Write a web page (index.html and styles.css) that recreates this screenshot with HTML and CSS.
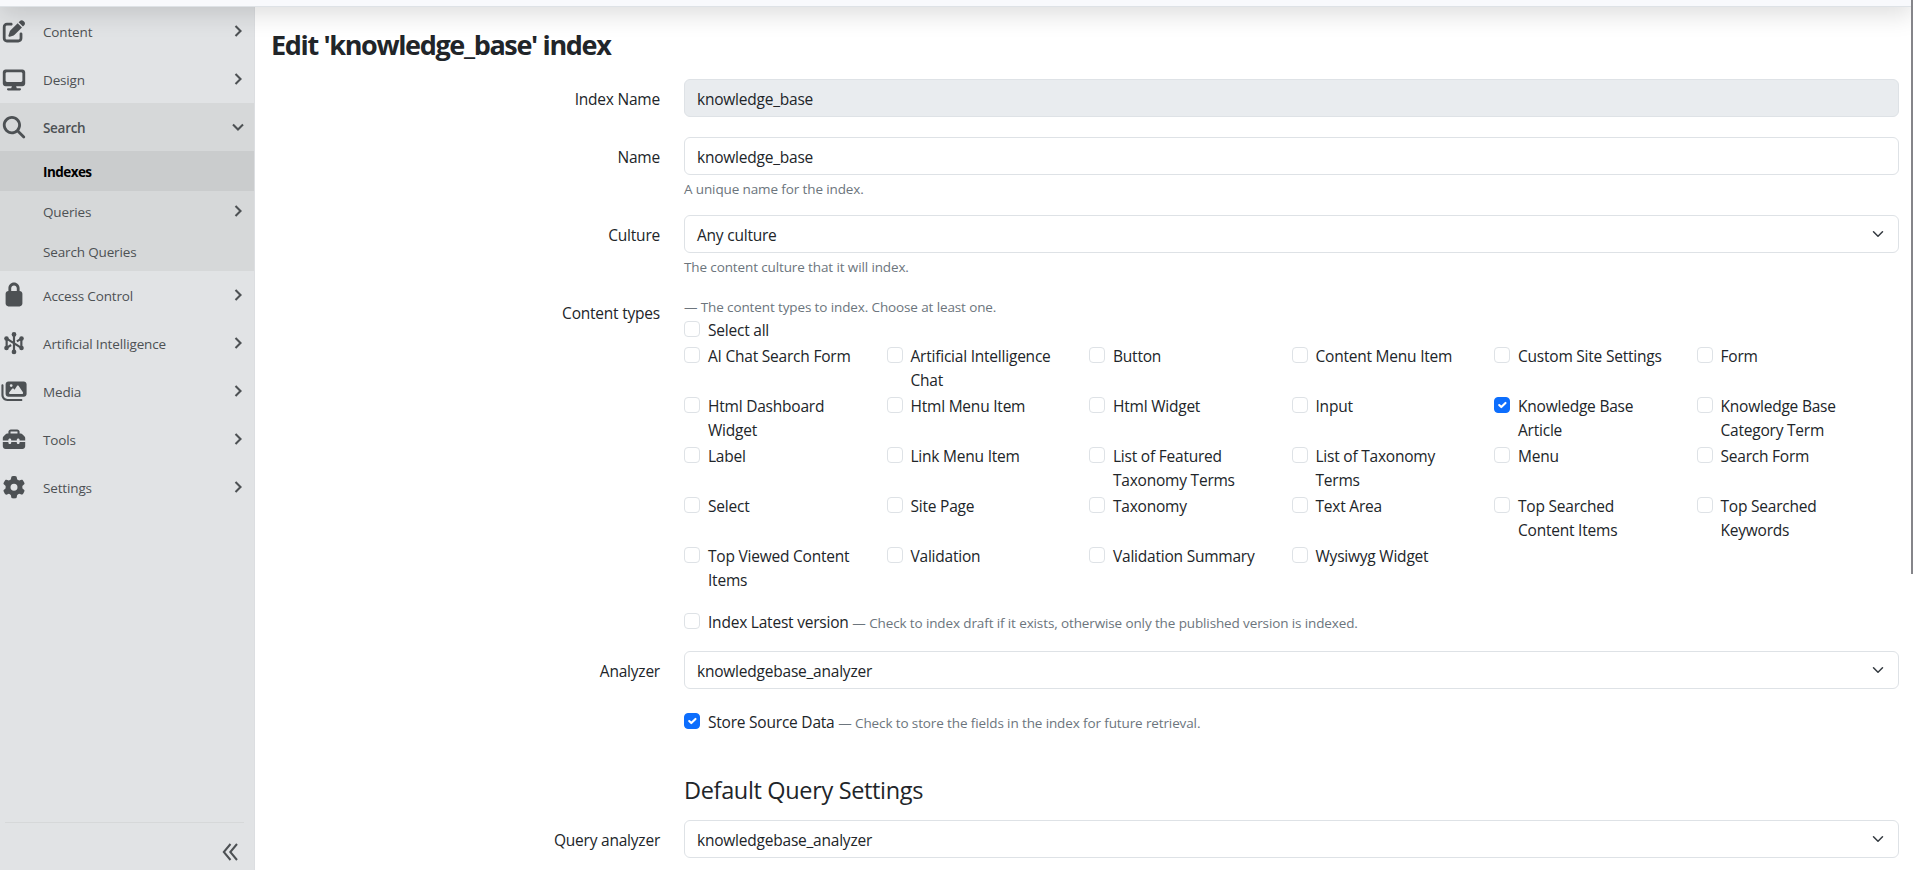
FILE: index.html
```html
<!DOCTYPE html>
<html lang="en">
<head>
  <meta charset="UTF-8" />
  <title>Edit 'knowledge_base' index</title>
  <link rel="stylesheet" href="styles.css">
</head>
<body>

<header class="topbar"></header>

<div class="wrapper">
  <!-- Left navigation -->
  <nav class="sidebar">
    <ul class="menu">
      <li><a class="item" href="#">
        <svg class="icon" viewBox="-64 0 640 512"><path d="M471.6 21.7c-21.9-21.9-57.3-21.9-79.2 0L362.3 51.7l97.9 97.9 30.1-30.1c21.9-21.9 21.9-57.3 0-79.2L471.6 21.7zm-299.2 220c-6.1 6.1-10.8 13.6-13.5 21.9l-29.6 88.8c-2.9 8.6-.6 18.1 5.8 24.6s15.9 8.7 24.6 5.8l88.8-29.6c8.2-2.7 15.7-7.4 21.9-13.5L437.7 172.3 339.7 74.3 172.4 241.7zM96 64C43 64 0 107 0 160V416c0 53 43 96 96 96H352c53 0 96-43 96-96V320c0-17.7-14.3-32-32-32s-32 14.3-32 32v96c0 17.700-14.300 32-32 32H96c-17.700 0-32-14.300-32-32V160c0-17.700 14.300-32 32-32h96c17.700 0 32-14.300 32-32s-14.300-32-32-32H96z"/></svg>
        <span>Content</span>
        <svg class="arrow" viewBox="0 0 12 12"><path d="M3.5 1l5 5-5 5"/></svg></a></li>
      <li><a class="item" href="#">
        <svg class="icon" viewBox="-64 0 640 512"><path d="M64 32C28.700 32 0 60.700 0 96v256c0 35.300 28.700 64 64 64h144l-16 48h-72c-13.300 0-24 10.700-24 24s10.700 24 24 24h272c13.300 0 24-10.700 24-24s-10.700-24-24-24h-72l-16-48h144c35.300 0 64-28.700 64-64V96c0-35.300-28.700-64-64-64H64zM96 96h320c17.700 0 32 14.300 32 32v160c0 17.700-14.300 32-32 32H96c-17.700 0-32-14.300-32-32V128c0-17.700 14.300-32 32-32z" fill-rule="evenodd"/></svg>
        <span>Design</span>
        <svg class="arrow" viewBox="0 0 12 12"><path d="M3.5 1l5 5-5 5"/></svg></a></li>
      <li class="open"><a class="item" href="#">
        <svg class="icon" viewBox="-64 0 640 512"><path d="M416 208c0 45.900-14.900 88.300-40 122.700L502.600 457.400c12.500 12.500 12.500 32.800 0 45.300s-32.800 12.500-45.300 0L330.700 376c-34.400 25.200-76.800 40-122.700 40C93.100 416 0 322.900 0 208S93.100 0 208 0S416 93.100 416 208zM208 352a144 144 0 1 0 0-288 144 144 0 1 0 0 288z"/></svg>
        <span>Search</span>
        <svg class="arrow" viewBox="0 0 12 12"><path d="M1 3.500l5 5 5-5"/></svg></a>
        <ul class="submenu">
          <li><a class="item active" href="#"><span>Indexes</span></a></li>
          <li><a class="item" href="#"><span>Queries</span>
            <svg class="arrow" viewBox="0 0 12 12"><path d="M3.5 1l5 5-5 5"/></svg></a></li>
          <li><a class="item" href="#"><span>Search Queries</span></a></li>
        </ul>
      </li>
      <li><a class="item" href="#">
        <svg class="icon" viewBox="-64 0 640 512"><path d="M192 96v64h128V96c0-35.300-28.700-64-64-64s-64 28.700-64 64zm-64 64V96c0-70.700 57.300-128 128-128S384 25.300 384 96v64c35.300 0 64 28.700 64 64v224c0 35.300-28.700 64-64 64H128c-35.300 0-64-28.700-64-64V224c0-35.300 28.700-64 64-64z" fill-rule="evenodd"/></svg>
        <span>Access Control</span>
        <svg class="arrow" viewBox="0 0 12 12"><path d="M3.5 1l5 5-5 5"/></svg></a></li>
      <li><a class="item" href="#">
        <svg class="icon" viewBox="-64 0 640 512"><path class="line" d="M256 60V452M88 135V377M424 135V377M88 150L424 362M88 362L190 298M424 150L322 214"/><circle cx="256" cy="56" r="54"/><circle cx="256" cy="456" r="54"/><circle cx="84" cy="147" r="52"/><circle cx="428" cy="147" r="52"/><circle cx="84" cy="365" r="52"/><circle cx="428" cy="365" r="52"/></svg>
        <span>Artificial Intelligence</span>
        <svg class="arrow" viewBox="0 0 12 12"><path d="M3.5 1l5 5-5 5"/></svg></a></li>
      <li><a class="item" href="#">
        <svg class="icon" viewBox="-32 0 640 512"><path d="M160 32c-35.300 0-64 28.700-64 64v224c0 35.300 28.700 64 64 64h352c35.300 0 64-28.700 64-64V96c0-35.300-28.700-64-64-64H160zM396 138.700l96 144c4.900 7.400 5.400 16.800 1.200 24.600S480.900 320 472 320H200c-9.200 0-17.600-5.300-21.600-13.600s-2.900-18.200 2.900-25.400l64-80c4.600-5.700 11.400-9 18.700-9s14.200 3.300 18.700 9l17.300 21.600 56-84C360.500 132 368 128 376 128s15.500 4 20 10.700zM192 128a32 32 0 1 1 64 0 32 32 0 1 1-64 0zM48 120c0-13.300-10.700-24-24-24S0 106.700 0 120v224c0 75.100 60.900 136 136 136h320c13.300 0 24-10.700 24-24s-10.700-24-24-24H136c-48.600 0-88-39.400-88-88V120z"/></svg>
        <span>Media</span>
        <svg class="arrow" viewBox="0 0 12 12"><path d="M3.5 1l5 5-5 5"/></svg></a></li>
      <li><a class="item" href="#">
        <svg class="icon" viewBox="-64 0 640 512"><path d="M176 88v40h160V88c0-4.400-3.600-8-8-8H184c-4.400 0-8 3.600-8 8zm-48 40V88c0-30.900 25.100-56 56-56h144c30.900 0 56 25.100 56 56v40h28.100c12.700 0 24.900 5.100 33.900 14.100l51.900 51.900c9 9 14.100 21.200 14.100 33.900V288H384v-16c0-17.700-14.300-32-32-32s-32 14.300-32 32v16H192v-16c0-17.700-14.300-32-32-32s-32 14.300-32 32v16H0v-60.100c0-12.700 5.100-24.900 14.100-33.900l51.900-51.900c9-9 21.200-14.100 33.900-14.100H128zM0 416v-96h128v16c0 17.700 14.300 32 32 32s32-14.300 32-32v-16h128v16c0 17.700 14.300 32 32 32s32-14.300 32-32v-16h128v96c0 35.300-28.700 64-64 64H64c-35.300 0-64-28.700-64-64z"/></svg>
        <span>Tools</span>
        <svg class="arrow" viewBox="0 0 12 12"><path d="M3.5 1l5 5-5 5"/></svg></a></li>
      <li><a class="item" href="#">
        <svg class="icon" viewBox="-64 0 640 512"><path d="M495.900 166.600c3.200 8.700 .5 18.400-6.400 24.600l-43.300 39.400c1.100 8.300 1.700 16.800 1.700 25.400s-.6 17.100-1.700 25.400l43.300 39.400c6.900 6.200 9.600 15.900 6.400 24.600c-4.400 11.900-9.700 23.300-15.800 34.300l-4.700 8.100c-6.600 11-14 21.400-22.100 31.200c-5.900 7.200-15.700 9.600-24.500 6.800l-55.700-17.700c-13.400 10.300-28.200 18.900-44 25.400l-12.500 57.100c-2 9.100-9 16.300-18.200 17.800c-13.800 2.300-28 3.500-42.500 3.500s-28.700-1.200-42.500-3.500c-9.200-1.500-16.200-8.700-18.200-17.800l-12.500-57.100c-15.800-6.500-30.600-15.100-44-25.400L83.100 425.900c-8.800 2.800-18.600 .3-24.500-6.800c-8.100-9.800-15.500-20.200-22.100-31.200l-4.700-8.100c-6.100-11-11.400-22.400-15.800-34.300c-3.200-8.700-.5-18.400 6.400-24.600l43.300-39.400C64.600 273.100 64 264.600 64 256s.6-17.100 1.700-25.400L22.400 191.200c-6.900-6.200-9.600-15.900-6.400-24.600c4.400-11.900 9.700-23.300 15.800-34.300l4.700-8.100c6.600-11 14-21.400 22.100-31.200c5.900-7.200 15.700-9.600 24.500-6.800l55.700 17.700c13.400-10.300 28.200-18.900 44-25.400l12.500-57.100c2-9.100 9-16.300 18.200-17.800C227.300 1.200 241.500 0 256 0s28.700 1.200 42.500 3.500c9.200 1.500 16.200 8.700 18.200 17.800l12.500 57.100c15.800 6.500 30.600 15.100 44 25.400l55.700-17.700c8.800-2.800 18.600-.3 24.500 6.800c8.100 9.800 15.500 20.200 22.100 31.200l4.700 8.100c6.100 11 11.400 22.400 15.800 34.300zM256 336a80 80 0 1 0 0-160 80 80 0 1 0 0 160z"/></svg>
        <span>Settings</span>
        <svg class="arrow" viewBox="0 0 12 12"><path d="M3.5 1l5 5-5 5"/></svg></a></li>
    </ul>
    <div class="compact">
      <svg class="collapse" viewBox="0 0 16 18"><path d="M8.500 1L1.800 9l6.700 8M15 1L8.300 9l6.700 8"/></svg>
    </div>
  </nav>

  <!-- Index form -->
  <main class="content">
    <h1>Edit 'knowledge_base' index</h1>

    <form>
      <div class="row">
        <label class="label">Index Name</label>
        <div class="field"><div class="control disabled">knowledge_base</div></div>
      </div>

      <div class="row">
        <label class="label">Name</label>
        <div class="field">
          <div class="control">knowledge_base</div>
          <span class="hint">A unique name for the index.</span>
        </div>
      </div>

      <div class="row">
        <label class="label">Culture</label>
        <div class="field">
          <div class="control">Any culture <svg class="caret" viewBox="0 0 16 16"><path d="m2 5 6 6 6-6"/></svg></div>
          <span class="hint">The content culture that it will index.</span>
        </div>
      </div>

      <div class="row types">
        <label class="label">Content types</label>
        <div class="field">
          <span class="hint intro">— The content types to index. Choose at least one.</span>
          <label class="check"><i class="box"></i><span>Select all</span></label>
          <div class="grid">
            <label class="check"><i class="box"></i><span>AI Chat Search Form</span></label>
            <label class="check"><i class="box"></i><span>Artificial Intelligence<br>Chat</span></label>
            <label class="check"><i class="box"></i><span>Button</span></label>
            <label class="check"><i class="box"></i><span>Content Menu Item</span></label>
            <label class="check"><i class="box"></i><span>Custom Site Settings</span></label>
            <label class="check"><i class="box"></i><span>Form</span></label>
            <label class="check"><i class="box"></i><span>Html Dashboard<br>Widget</span></label>
            <label class="check"><i class="box"></i><span>Html Menu Item</span></label>
            <label class="check"><i class="box"></i><span>Html Widget</span></label>
            <label class="check"><i class="box"></i><span>Input</span></label>
            <label class="check"><i class="box checked"><svg viewBox="0 0 20 20"><path d="m6 10 3 3 6-6"/></svg></i><span>Knowledge Base<br>Article</span></label>
            <label class="check"><i class="box"></i><span>Knowledge Base<br>Category Term</span></label>
            <label class="check"><i class="box"></i><span>Label</span></label>
            <label class="check"><i class="box"></i><span>Link Menu Item</span></label>
            <label class="check"><i class="box"></i><span>List of Featured<br>Taxonomy Terms</span></label>
            <label class="check"><i class="box"></i><span>List of Taxonomy<br>Terms</span></label>
            <label class="check"><i class="box"></i><span>Menu</span></label>
            <label class="check"><i class="box"></i><span>Search Form</span></label>
            <label class="check"><i class="box"></i><span>Select</span></label>
            <label class="check"><i class="box"></i><span>Site Page</span></label>
            <label class="check"><i class="box"></i><span>Taxonomy</span></label>
            <label class="check"><i class="box"></i><span>Text Area</span></label>
            <label class="check"><i class="box"></i><span>Top Searched<br>Content Items</span></label>
            <label class="check"><i class="box"></i><span>Top Searched<br>Keywords</span></label>
            <label class="check"><i class="box"></i><span>Top Viewed Content<br>Items</span></label>
            <label class="check"><i class="box"></i><span>Validation</span></label>
            <label class="check"><i class="box"></i><span>Validation Summary</span></label>
            <label class="check"><i class="box"></i><span>Wysiwyg Widget</span></label>
          </div>
        </div>
      </div>

      <div class="row latest">
        <div class="label"></div>
        <div class="field">
          <label class="check"><i class="box"></i><span>Index Latest version <span class="hint">— Check to index draft if it exists, otherwise only the published version is indexed.</span></span></label>
        </div>
      </div>

      <div class="row">
        <label class="label">Analyzer</label>
        <div class="field">
          <div class="control">knowledgebase_analyzer <svg class="caret" viewBox="0 0 16 16"><path d="m2 5 6 6 6-6"/></svg></div>
        </div>
      </div>

      <div class="row store">
        <div class="label"></div>
        <div class="field">
          <label class="check"><i class="box checked"><svg viewBox="0 0 20 20"><path d="m6 10 3 3 6-6"/></svg></i><span>Store Source Data <span class="hint">— Check to store the fields in the index for future retrieval.</span></span></label>
        </div>
      </div>

      <div class="row heading">
        <div class="label"></div>
        <div class="field"><h4>Default Query Settings</h4></div>
      </div>

      <div class="row">
        <label class="label">Query analyzer</label>
        <div class="field">
          <div class="control">knowledgebase_analyzer <svg class="caret" viewBox="0 0 16 16"><path d="m2 5 6 6 6-6"/></svg></div>
        </div>
      </div>
    </form>
  </main>
</div>

<div class="scrollbar"></div>

</body>
</html>
```
FILE: styles.css
```css
* {
  box-sizing: border-box;
}
body {
  margin: 0;
  height: 870px;
  overflow: hidden;
  background: #fff;
  color: #212529;
  font-family: "Segoe UI", "Open Sans", "Noto Sans", sans-serif;
  font-size: 15.5px;
  line-height: 24px;
  letter-spacing: -0.22px;
}
ul {
  list-style: none;
  margin: 0;
  padding: 0;
}
.topbar {
  position: relative;
  z-index: 2;
  height: 57px;
  margin-top: -50px;
  background: #f8f9fc;
  border-bottom: 1px solid #dee2e6;
  box-shadow: 0 8px 24px rgba(0, 0, 0, 0.13);
}
.wrapper {
  display: flex;
  height: 863px;
}

/* sidebar */
.sidebar {
  display: flex;
  flex-direction: column;
  width: 255px;
  flex: none;
  background: #e1e3e5;
  border-right: 1px solid #dcdee1;
}
.menu {
  flex: 1;
}
.item {
  display: flex;
  align-items: center;
  height: 48px;
  padding-right: 10px;
  color: #4d5154;
  font-size: 13.5px;
  letter-spacing: -0.15px;
  text-decoration: none;
}
.item span {
  flex: 1;
  padding-top: 2px;
}
.icon {
  width: 28px;
  height: 22.4px;
  margin-right: 15px;
  overflow: visible;
  fill: #4d5154;
}
.icon .line {
  fill: none;
  stroke: #4d5154;
  stroke-width: 50;
}
.arrow {
  width: 12px;
  height: 12px;
  fill: none;
  stroke: #4d5154;
  stroke-width: 2.1;
}
.open {
  background: #d6d8d9;
}
.open > .item {
  font-weight: 600;
  letter-spacing: -0.3px;
}
.submenu .item {
  height: 40px;
  padding-left: 43px;
}
.submenu .active {
  background: #cacccd;
  color: #000;
  font-weight: 700;
  letter-spacing: -0.55px;
}
.compact {
  display: flex;
  justify-content: flex-end;
  height: 48px;
  margin: 0 10px 0 5px;
  padding: 20px 6px 0 0;
  border-top: 1px solid #d6d8d9;
}
.collapse {
  width: 16px;
  height: 18px;
  fill: none;
  stroke: #4d5154;
  stroke-width: 2;
}

/* form */
.content {
  flex: 1;
  padding: 21px 14px 0 16px;
}
h1 {
  margin: 0 0 17px;
  font-size: 27px;
  font-weight: 700;
  line-height: 34px;
  letter-spacing: -1.35px;
}
h4 {
  margin: 0;
  font-size: 23.5px;
  font-weight: 400;
  line-height: 29px;
  letter-spacing: -0.34px;
}
.row {
  display: flex;
  margin-bottom: 20px;
}
.label {
  width: 389px;
  margin-right: 24px;
  padding-top: 8px;
  text-align: right;
}
.field {
  width: 1215px;
}
.control {
  display: flex;
  align-items: center;
  justify-content: space-between;
  height: 38px;
  padding: 2px 12px 0;
  border: 1px solid #dee2e6;
  border-radius: 6px;
}
.disabled {
  background: #e9ecef;
}
.caret {
  width: 16px;
  height: 12px;
  margin-top: -3px;
  fill: none;
  stroke: #343a40;
  stroke-width: 2;
  stroke-linecap: round;
  stroke-linejoin: round;
}
.hint {
  color: #6c757d;
  font-size: 13.5px;
  letter-spacing: -0.12px;
}
.field > .hint {
  display: block;
  height: 20px;
  padding-top: 2px;
}
.types {
  margin-bottom: 16px;
}
.field > .intro {
  height: 24px;
}
.check {
  display: flex;
  min-height: 24px;
  margin-bottom: 2px;
}
.box {
  flex: none;
  width: 16px;
  height: 16px;
  margin: 4px 8px 0 0;
  border: 1px solid #dee2e6;
  border-radius: 4px;
}
.check > span {
  padding-top: 1px;
  margin-bottom: -1px;
}
.checked {
  background: #0d6efd;
  border-color: #0d6efd;
}
.checked svg {
  display: block;
  fill: none;
  stroke: #fff;
  stroke-width: 3;
  stroke-linecap: round;
  stroke-linejoin: round;
}
.grid {
  display: grid;
  grid-template-columns: repeat(6, 1fr);
}
.latest {
  margin-bottom: 15px;
}
.store {
  margin-bottom: 40px;
}
.heading {
  margin-bottom: 15px;
}
.scrollbar {
  position: fixed;
  z-index: 3;
  top: 0;
  right: 0;
  width: 2px;
  height: 574px;
  background: #85858a;
}
```
